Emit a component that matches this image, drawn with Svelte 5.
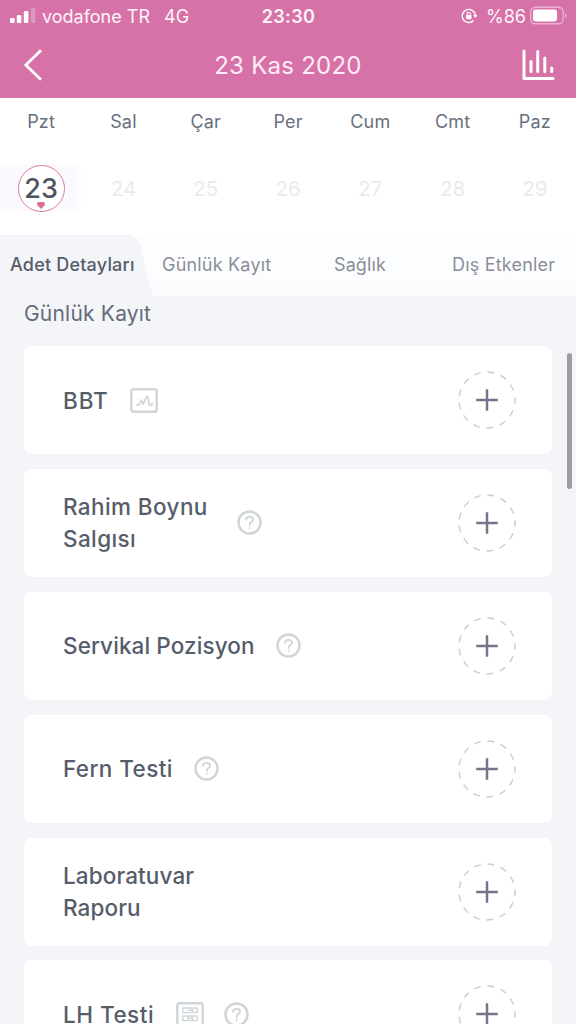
<script>
  const days = [
    { name: 'Pzt', date: 23, active: true },
    { name: 'Sal', date: 24 },
    { name: 'Çar', date: 25 },
    { name: 'Per', date: 26 },
    { name: 'Cum', date: 27 },
    { name: 'Cmt', date: 28 },
    { name: 'Paz', date: 29 }
  ];
  const items = [
    { lines: ['BBT'], icons: ['chart'], tracking: 0.9 },
    { lines: ['Rahim Boynu', 'Salgısı'], icons: ['help'], tracking: 0.4 },
    { lines: ['Servikal Pozisyon'], icons: ['help'], tracking: 0.1 },
    { lines: ['Fern Testi'], icons: ['help'], tracking: 0.4 },
    { lines: ['Laboratuvar', 'Raporu'], icons: [], tracking: 0.12 },
    { lines: ['LH Testi'], icons: ['strip', 'help'], tracking: 0.5 }
  ];
</script>

<div class="screen">
  <header>
    <div class="status">
      <div class="carrier">
        <svg width="26" height="16" viewBox="0 0 26 16" fill="#fff">
          <rect x="0" y="10" width="4.6" height="5" rx="1" />
          <rect x="6.800" y="7" width="4.600" height="8" rx="1" />
          <rect x="13.800" y="3" width="4.600" height="12" rx="1" />
          <rect x="20.800" y="0" width="4.600" height="15" rx="1" opacity=".25" />
        </svg>
        <span class="operator">vodafone TR</span>
        <span class="network">4G</span>
      </div>
      <span class="time">23:30</span>
      <div class="power">
        <svg width="17" height="16" viewBox="0 0 17 16" fill="none" stroke="#fff" stroke-width="1.4">
          <path d="M12.6 12.6A6.6 6.6 0 1 1 14.4 7.2" />
          <path d="M12.2 7h4.200l-2.100 2.900z" fill="#fff" stroke="none" />
          <rect x="5.100" y="7" width="5.400" height="4.200" rx=".6" fill="#fff" stroke="none" />
          <path d="M6.200 7V5.800a1.600 1.600 0 0 1 3.200 0V7" stroke-width="1.100" />
        </svg>
        <span class="percent">%86</span>
        <svg width="37" height="20" viewBox="0 0 37 20" fill="none">
          <rect x=".8" y="1.300" width="32.400" height="16.400" rx="4.500" stroke="#fff" stroke-opacity=".45" stroke-width="1.400" />
          <rect x="3" y="3.500" width="24" height="12" rx="2.400" fill="#fff" />
          <path d="M35 7v5.400q1.500-.8 1.500-2.700T35 7" fill="#fff" fill-opacity=".45" />
        </svg>
      </div>
    </div>
    <div class="nav">
      <svg width="20" height="34" viewBox="0 0 20 34" fill="none" stroke="#fff" stroke-width="2.700">
        <path d="M18 2.300 2.800 17 18 31.700" />
      </svg>
      <h1>23 Kas 2020</h1>
      <svg class="stats" width="34" height="32" viewBox="0 0 34 32" fill="none" stroke="#fff" stroke-width="3" stroke-linecap="round" stroke-linejoin="round">
        <path d="M2 2v27.500h29M9 12.500v10M15.700 2.500v20M22.800 9v13.500M29.700 19v3.500" />
      </svg>
    </div>
  </header>

  <section class="week">
    {#each days as day}
      <div class="day" class:active={day.active}>
        <span class="name">{day.name}</span>
        <div class="cell">
          <div class="date">
            {day.date}
            {#if day.active}
              <svg class="heart" width="8" height="7" viewBox="0 0 8 7" fill="#dc6d98">
                <path d="M4 7 .6 3.600C-.7 1.800.3 0 2 0h4c1.700 0 2.700 1.800 1.400 3.600z" />
              </svg>
            {/if}
          </div>
        </div>
      </div>
    {/each}
  </section>

  <nav class="tabs">
    <svg class="tab-shape" width="156" height="62" viewBox="0 0 156 62">
      <path d="M0 0h128c8 0 11 5 13 12l8 37c2 8 4 11 7 13H0z" fill="#f3f5f9" />
    </svg>
    <span class="tab t1 selected">Adet Detayları</span>
    <span class="tab t2">Günlük Kayıt</span>
    <span class="tab t3">Sağlık</span>
    <span class="tab t4">Dış Etkenler</span>
  </nav>

  <main>
    <h2>Günlük Kayıt</h2>
    <div class="list">
      {#each items as item}
        <article>
          <div class="label" class:wide={item.lines.length > 1} style="letter-spacing: {item.tracking}px">
            {#each item.lines as line}
              <div>{line}</div>
            {/each}
          </div>
          <div class="icons">
            {#each item.icons as icon}
              {#if icon === 'chart'}
                <svg width="28" height="25" viewBox="0 0 28 25" fill="none" stroke="#d0d5d9" stroke-width="2.400">
                  <rect x="1.300" y="1.300" width="25.400" height="22.400" rx="2" />
                  <path d="M6.500 16.800 8.800 17l2.700-5 1.800 4.200L16.500 8.800h1.300l1.700 8.200h2l1-1.800" stroke-width="1.700" stroke-linejoin="round" stroke-linecap="round" />
                </svg>
              {:else if icon === 'strip'}
                <svg width="28" height="25" viewBox="0 0 28 25" fill="none" stroke="#d0d5d9" stroke-width="2.400">
                  <rect x="1.300" y="1.300" width="25.400" height="22.400" rx="2" />
                  <path d="M6.800 6h14.400v4.600H6.800zM6.800 14h14.400v4.600H6.800zM12 8.300h4.500M12 16.300h4.500M16.500 6v4.600M12 14v4.600M16.500 14v4.600" stroke-width="1.400" stroke-linejoin="round" />
                </svg>
              {:else}
                <svg width="25" height="25" viewBox="0 0 25 25" fill="none" stroke="#d0d5d9" stroke-linecap="round">
                  <circle cx="12.500" cy="12.500" r="11" stroke-width="2.500" />
                  <path d="M9 9.700C9 7.800 10.400 6.800 12.500 6.800s3.600 1.100 3.600 2.900c0 2.300-3.500 2.500-3.500 5.300M12.600 18v.2" stroke-width="1.800" />
                </svg>
              {/if}
            {/each}
          </div>
          <svg class="add" width="58" height="58" viewBox="0 0 58 58" fill="none">
            <circle cx="29" cy="29" r="28" stroke="#cbcdd1" stroke-width="1.400" stroke-dasharray="6.800 6.730" stroke-dashoffset="3" />
            <path d="M18.200 29h21.600M29 18.200v21.600" stroke="#74758a" stroke-width="2.500" />
          </svg>
        </article>
      {/each}
    </div>
    <div class="scrollbar"></div>
  </main>
</div>

<style>
  :global(body) { margin: 0; overflow: hidden; }
  .screen {
    position: relative;
    width: 576px;
    height: 1024px;
    overflow: hidden;
    display: flex;
    flex-direction: column;
    background: #f3f5f9;
    font-family: Inter, "Liberation Sans", sans-serif;
    color: #565d6a;
  }
  header { height: 98px; flex: none; background: #d672a8; color: #fff; }
  .status {
    height: 32px;
    display: grid;
    grid-template-columns: 1fr auto 1fr;
    align-items: center;
    padding: 0 9px 0 10px;
    font-size: 18px;
    color: #fff3fa;
  }
  .carrier, .power { display: flex; align-items: center; }
  .power { justify-content: flex-end; }
  .operator { margin-left: 6px; }
  .network { margin-left: 14px; }
  .time { font-weight: 600; font-size: 18px; letter-spacing: .4px; }
  .percent { margin: 0 4px 0 8px; }
  .nav {
    height: 66px;
    display: grid;
    grid-template-columns: 1fr auto 1fr;
    align-items: center;
    padding: 0 20px 0 23px;
    box-sizing: border-box;
  }
  .stats { justify-self: end; }
  h1 { margin: 0; padding-right: 3px; font-size: 24px; font-weight: 400; letter-spacing: .25px; color: #ffecf6; }
  .week {
    height: 137px;
    flex: none;
    display: grid;
    grid-template-columns: repeat(7, 82.3px);
    background: #fff;
  }
  .day { display: flex; flex-direction: column; align-items: center; }
  .name { height: 47px; line-height: 47px; font-size: 18px; letter-spacing: .2px; color: #68707e; }
  .cell {
    width: 100%;
    height: 46px;
    margin-top: 20px;
    display: flex;
    justify-content: center;
    align-items: center;
  }
  .active .cell { background: linear-gradient(90deg, #fbf9fe 90%, #fff); }
  .date {
    position: relative;
    width: 47px;
    height: 47px;
    box-sizing: border-box;
    border-radius: 50%;
    line-height: 48px;
    font-size: 20.5px;
    text-align: center;
    color: #e8ebef;
  }
  .active .date {
    border: 1.5px solid #dc7ba1;
    background: #fff;
    color: #4d5361;
    font-size: 27px;
    line-height: 46px;
    font-weight: 500;
  }
  .heart { position: absolute; left: 18px; bottom: 2px; }
  .tabs {
    position: relative;
    height: 61px;
    flex: none;
    display: flex;
    background: linear-gradient(#fdfeff, #fafcfe);
    font-size: 18px;
    line-height: 60px;
    color: #8b8e98;
    white-space: nowrap;
  }
  .tab-shape { position: absolute; left: 0; top: 0; }
  .tab { position: relative; flex: none; letter-spacing: .2px; }
  .t1 { margin-left: 10px; width: 152px; }
  .t2 { width: 172px; }
  .t3 { width: 118px; }
  .t3 { letter-spacing: .1px; }
  .selected { font-weight: 500; color: #565c6a; }
  main { flex: 1; padding: 0 24px; position: relative; }
  h2 { margin: 0; height: 50px; line-height: 35px; font-size: 21px; font-weight: 400; letter-spacing: .2px; color: #656b78; }
  .list { display: flex; flex-direction: column; gap: 14.9px; }
  article {
    height: 108px;
    flex: none;
    box-sizing: border-box;
    padding: 0 36px 0 39px;
    display: flex;
    align-items: center;
    background: #fff;
    border-radius: 8px;
  }
  .label { padding-top: 1px; font-size: 22.5px; line-height: 32px; font-weight: 500; white-space: nowrap; }
  .wide { width: 152px; }
  .icons { display: flex; gap: 20px; margin-left: 21.5px; }
  .add { margin-left: auto; }
  svg { display: block; flex: none; }
  .scrollbar {
    position: absolute;
    right: 4.5px;
    top: 57px;
    width: 5px;
    height: 136px;
    border-radius: 3px;
    background: #9b9da3;
  }
</style>
